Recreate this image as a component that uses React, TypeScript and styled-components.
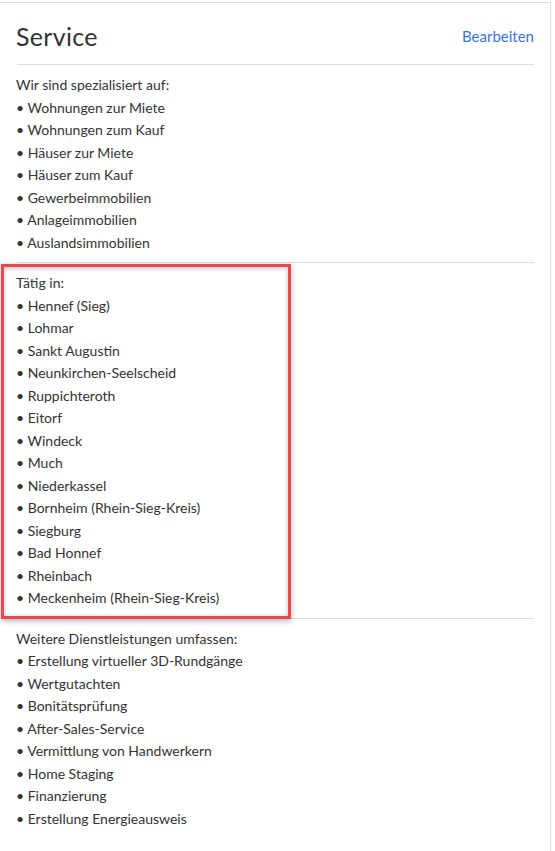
import React from "react";
import styled, { createGlobalStyle } from "styled-components";

const GlobalStyle = createGlobalStyle`
  html, body {
    margin: 0;
    padding: 0;
    background: #ffffff;
  }
  body {
    font-family: Lato, "Open Sans", "Liberation Sans", sans-serif;
    color: #333333;
  }
`;

const Card = styled.div`
  margin-top: 2px;
  margin-left: -1px;
  width: 552px;
  min-height: 849px;
  box-sizing: border-box;
  border: 1px solid #dddddd;
  border-bottom: none;
  padding: 0 16px 0 17px;
  background: #ffffff;
`;

const Header = styled.div`
  display: flex;
  align-items: center;
  justify-content: space-between;
  height: 62px;
  padding-top: 5px;
  box-sizing: border-box;
  border-bottom: 1px solid #dddddd;
`;

const Title = styled.h2`
  margin: 0 0 0 -1px;
  font-size: 25px;
  font-weight: 400;
  color: #333333;
  letter-spacing: 0.3px;
`;

const EditLink = styled.a`
  font-size: 15px;
  color: #3b74e4;
  text-decoration: none;
  cursor: pointer;
`;

const Section = styled.section<{ $last?: boolean }>`
  position: relative;
  padding: 9px 0 8px;
  border-bottom: ${(p) => (p.$last ? "none" : "1px solid #dddddd")};
`;

const Line = styled.div`
  margin-left: -1px;
  font-size: 14px;
  line-height: 22.5px;
  color: #333333;
  white-space: nowrap;
`;

const Highlight = styled.div`
  position: absolute;
  top: 1px;
  left: -16px;
  width: 290px;
  bottom: -1px;
  box-sizing: border-box;
  border: 3px solid #f0454b;
  box-shadow: 0 2px 6px rgba(0, 0, 0, 0.3), inset 0 1px 5px rgba(0, 0, 0, 0.25);
  pointer-events: none;
`;

type Group = { heading: string; items: string[]; marked?: boolean };

const groups: Group[] = [
  {
    heading: "Wir sind spezialisiert auf:",
    items: [
      "Wohnungen zur Miete",
      "Wohnungen zum Kauf",
      "Häuser zur Miete",
      "Häuser zum Kauf",
      "Gewerbeimmobilien",
      "Anlageimmobilien",
      "Auslandsimmobilien",
    ],
  },
  {
    heading: "Tätig in:",
    marked: true,
    items: [
      "Hennef (Sieg)",
      "Lohmar",
      "Sankt Augustin",
      "Neunkirchen-Seelscheid",
      "Ruppichteroth",
      "Eitorf",
      "Windeck",
      "Much",
      "Niederkassel",
      "Bornheim (Rhein-Sieg-Kreis)",
      "Siegburg",
      "Bad Honnef",
      "Rheinbach",
      "Meckenheim (Rhein-Sieg-Kreis)",
    ],
  },
  {
    heading: "Weitere Dienstleistungen umfassen:",
    items: [
      "Erstellung virtueller 3D-Rundgänge",
      "Wertgutachten",
      "Bonitätsprüfung",
      "After-Sales-Service",
      "Vermittlung von Handwerkern",
      "Home Staging",
      "Finanzierung",
      "Erstellung Energieausweis",
    ],
  },
];

export default function App() {
  return (
    <>
      <GlobalStyle />
      <Card>
        <Header>
          <Title>Service</Title>
          <EditLink>Bearbeiten</EditLink>
        </Header>
        {groups.map((g, i) => (
          <Section key={g.heading} $last={i === groups.length - 1}>
            <Line>{g.heading}</Line>
            {g.items.map((item) => (
              <Line key={item}>• {item}</Line>
            ))}
            {g.marked && <Highlight />}
          </Section>
        ))}
      </Card>
    </>
  );
}
